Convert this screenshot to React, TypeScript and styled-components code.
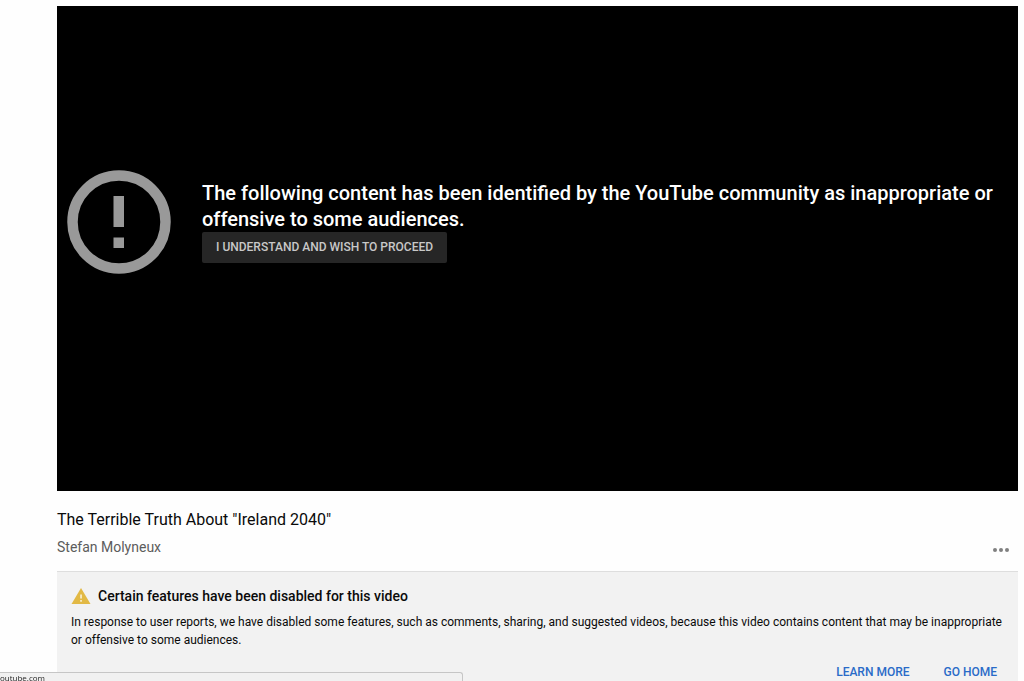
import React from "react";
import styled, { createGlobalStyle } from "styled-components";

const GlobalStyle = createGlobalStyle`
  * { box-sizing: border-box; }
  body {
    margin: 0;
    background: #fefefe;
    color: #0a0a0a;
    font-family: Roboto, Arial, sans-serif;
    overflow: hidden;
  }
`;

const Page = styled.div`
  border-top: 6px solid #fefefe;
  height: 100vh;
  overflow: hidden;
`;

const Main = styled.main`
  padding: 0 6px 0 57px;
`;

const Player = styled.section`
  display: flex;
  align-items: center;
  aspect-ratio: 961 / 485;
  padding: 0 0 54px 10px;
  background: #000;
`;

const AlertIcon = styled.svg`
  flex: none;
  width: 104px;
  height: 104px;
  margin-right: 31px;
`;

const Warning = styled.div`
  flex: 1;
  min-width: 0;
`;

const WarningText = styled.p`
  margin: 0;
  color: #fff;
  font-size: 20px;
  font-weight: 500;
  line-height: 26px;
`;

const ProceedButton = styled.button`
  display: block;
  height: 31px;
  padding: 0 14px;
  border: 0;
  border-radius: 2px;
  background: #262626;
  color: #c8c8c8;
  font: 500 12px/31px Roboto, Arial, sans-serif;
  text-transform: uppercase;
  white-space: nowrap;
`;

const Title = styled.h1`
  margin: 18px 0 0;
  font-size: 16px;
  font-weight: 400;
  line-height: 22px;
`;

const OwnerRow = styled.div`
  display: flex;
  justify-content: space-between;
  align-items: flex-start;
  height: 34px;
  margin-top: 6px;
  padding-right: 9px;
`;

const Owner = styled.a`
  color: #5c5c5c;
  font-size: 14px;
  font-weight: 400;
  line-height: 20px;
  text-decoration: none;
`;

const MoreButton = styled.button`
  display: flex;
  padding: 9px 0;
  border: 0;
  background: none;
`;

const Notice = styled.section`
  padding: 14px 8px 14px 14px;
  border-top: 1px solid #dedede;
  background: #f2f2f2;
`;

const NoticeHeader = styled.div`
  display: flex;
  align-items: center;
  gap: 7px;
`;

const NoticeTitle = styled.h2`
  margin: 0;
  font-size: 14px;
  font-weight: 500;
  line-height: 20px;
`;

const NoticeText = styled.p`
  margin: 7px 0 0;
  font-size: 12px;
  line-height: 18px;
`;

const Actions = styled.div`
  display: flex;
  justify-content: flex-end;
  gap: 34px;
  margin-top: 14px;
  padding-right: 13px;
`;

const Action = styled.a`
  color: #2a6bc8;
  font-size: 12px;
  font-weight: 500;
  line-height: 18px;
  text-decoration: none;
  text-transform: uppercase;
`;

const StatusBubble = styled.div`
  position: fixed;
  left: 0;
  bottom: 0;
  width: 463px;
  max-width: 50%;
  height: 9px;
  border: solid #c6c6c6;
  border-width: 1px 1px 0 0;
  border-radius: 0 3px 0 0;
  background: #f1f1f1;
  color: #222;
  font: 8px/10px "Open Sans", sans-serif;
  overflow: hidden;
`;

export default function App() {
  return (
    <Page>
      <GlobalStyle />
      <Main>
        <Player>
          <AlertIcon viewBox="0 0 104 104" aria-hidden="true">
            <circle cx="52" cy="52" r="46.5" fill="none" stroke="#999" strokeWidth="10.5" />
            <path d="M46.500 26h10.500v31H46.500zM46.500 67.500h10.500v10.500H46.500z" fill="#999" />
          </AlertIcon>
          <Warning>
            <WarningText>
              The following content has been identified by the YouTube community as inappropriate or
              offensive to some audiences.
            </WarningText>
            <ProceedButton type="button">I understand and wish to proceed</ProceedButton>
          </Warning>
        </Player>
        <Title>The Terrible Truth About "Ireland 2040"</Title>
        <OwnerRow>
          <Owner href="#channel">Stefan Molyneux</Owner>
          <MoreButton type="button" aria-label="More actions">
            <svg width="16" height="8" viewBox="0 0 16 8" fill="#808080">
              <circle cx="2" cy="4" r="2" />
              <circle cx="8" cy="4" r="2" />
              <circle cx="14" cy="4" r="2" />
            </svg>
          </MoreButton>
        </OwnerRow>
        <Notice>
          <NoticeHeader>
            <svg width="20" height="20" viewBox="0 0 20 20" aria-hidden="true">
              <path d="M.5 18 10 2l9.500 16z" fill="#e2b945" />
              <path d="M9.200 8.500h1.700v4H9.200zM9.200 14h1.700v1.700H9.200z" fill="#f8efd2" />
            </svg>
            <NoticeTitle>Certain features have been disabled for this video</NoticeTitle>
          </NoticeHeader>
          <NoticeText>
            In response to user reports, we have disabled some features, such as comments, sharing,
            and suggested videos, because this video contains content that may be inappropriate or
            offensive to some audiences.
          </NoticeText>
          <Actions>
            <Action href="#learn">Learn more</Action>
            <Action href="#home">Go home</Action>
          </Actions>
        </Notice>
      </Main>
      <StatusBubble>outube.com</StatusBubble>
    </Page>
  );
}
